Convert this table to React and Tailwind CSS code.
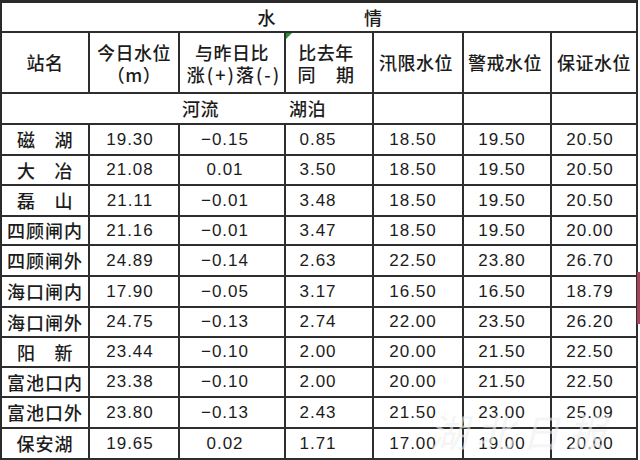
import React from 'react';

const rows = [
  ['磁湖', '19.30', '−0.15', '0.85', '18.50', '19.50', '20.50'],
  ['大冶', '21.08', '0.01', '3.50', '18.50', '19.50', '20.50'],
  ['磊山', '21.11', '−0.01', '3.48', '18.50', '19.50', '20.50'],
  ['四顾闸内', '21.16', '−0.01', '3.47', '18.50', '19.50', '20.00'],
  ['四顾闸外', '24.89', '−0.14', '2.63', '22.50', '23.80', '26.70'],
  ['海口闸内', '17.90', '−0.05', '3.17', '16.50', '16.50', '18.79'],
  ['海口闸外', '24.75', '−0.13', '2.74', '22.00', '23.50', '26.20'],
  ['阳新', '23.44', '−0.10', '2.00', '20.00', '21.50', '22.50'],
  ['富池口内', '23.38', '−0.10', '2.00', '20.00', '21.50', '22.50'],
  ['富池口外', '23.80', '−0.13', '2.43', '21.50', '23.00', '25.09'],
  ['保安湖', '19.65', '0.02', '1.71', '17.00', '19.00', '20.00'],
];

const rowH = ['h-[31px]', 'h-[30px]', 'h-[31px]', 'h-[29px]', 'h-[31px]', 'h-[31px]', 'h-[30px]', 'h-[30px]', 'h-[30px]', 'h-[31px]', 'h-[31px]'];

const grid = 'grid grid-cols-[88px_90px_106px_88px_90px_88px_86px]';
const line = 'border-r-2 border-b-2 border-[#2e2e2e] flex items-center';
const cell = `${line} justify-center`;
const cjk = "font-['Noto_Sans_CJK_SC',sans-serif] font-medium text-[18px] tracking-[0.5px]";
const num = "font-['Liberation_Sans','Noto_Sans_CJK_SC',sans-serif] text-[17px] tracking-[1px]";

// two-character names are spread across the cell, longer ones are centred
const Name = ({ name }) =>
  name.length === 2 ? (
    <div className={`${line} ${cjk} justify-between px-[15px]`}>
      <span>{name[0]}</span>
      <span>{name[1]}</span>
    </div>
  ) : (
    <div className={`${cell} ${cjk} tracking-[1px]`}>{name}</div>
  );

export default function App() {
  return (
    <div className="relative w-[640px] h-[460px] overflow-hidden bg-white text-[#1c1c1c]">
      <div className="w-[638px] border-l-2 border-t-[3px] border-[#2a2a2a]">
        {/* title */}
        <div className={`${cell} ${cjk} h-[30px] gap-[88px] pl-[2px]`}>
          <span>水</span>
          <span>情</span>
        </div>

        {/* column headers */}
        <div className={`${grid} h-[61px]`}>
          <div className={`${cell} ${cjk}`}>站名</div>
          <div className={`${cell} ${cjk} flex-col leading-[22px]`}>
            <span>今日水位</span>
            <span>（m）</span>
          </div>
          <div className={`${cell} ${cjk} flex-col leading-[22px]`}>
            <span>与昨日比</span>
            <span className="pl-[4px] tracking-[2px]">涨(+)落(-)</span>
          </div>
          <div className={`${cell} ${cjk} relative flex-col leading-[22px] pr-[6px]`}>
            <span className="absolute left-0 top-0 w-0 h-0 border-t-[6px] border-r-[6px] border-t-[#2f8f2f] border-r-transparent" />
            <span>比去年</span>
            <span className="flex w-[57px] justify-between">
              <span>同</span>
              <span>期</span>
            </span>
          </div>
          <div className={`${cell} ${cjk} pr-[4px]`}>汛限水位</div>
          <div className={`${cell} ${cjk} pr-[4px]`}>警戒水位</div>
          <div className={`${cell} ${cjk}`}>保证水位</div>
        </div>

        {/* river / lake */}
        <div className={`${grid} h-[31px]`}>
          <div className="col-span-2 border-b-2 border-[#2e2e2e]" />
          <div className={`border-b-2 border-[#2e2e2e] flex items-center pl-[2px] ${cjk}`}>河流</div>
          <div className={`border-r-2 border-b-2 border-[#2e2e2e] flex items-center pl-[3px] ${cjk}`}>湖泊</div>
          <div className={cell} />
          <div className={cell} />
          <div className={cell} />
        </div>

        {rows.map((r, i) => (
          <div key={r[0]} className={`${grid} ${rowH[i]}`}>
            <Name name={r[0]} />
            <div className={`${cell} ${num} pr-[8px]`}>{r[1]}</div>
            <div className={`${cell} ${num} pr-[14px]`}>{r[2]}</div>
            <div className={`${cell} ${num} pr-[22px]`}>{r[3]}</div>
            <div className={`${cell} ${num} pr-[10px]`}>{r[4]}</div>
            <div className={`${cell} ${num} pr-[10px]`}>{r[5]}</div>
            <div className={`${cell} ${num} pr-[8px]`}>{r[6]}</div>
          </div>
        ))}
      </div>

      {/* edge marker and faint watermark */}
      <div className="absolute right-0 top-[272px] w-[3px] h-[52px] bg-[#a5435f]" />
      <div className="absolute left-[430px] top-[412px] font-['Noto_Sans_CJK_SC',sans-serif] text-[38px] leading-none italic tracking-[8px] text-[#f0f0f0] opacity-60 pointer-events-none">
        湖北日报
      </div>
    </div>
  );
}
